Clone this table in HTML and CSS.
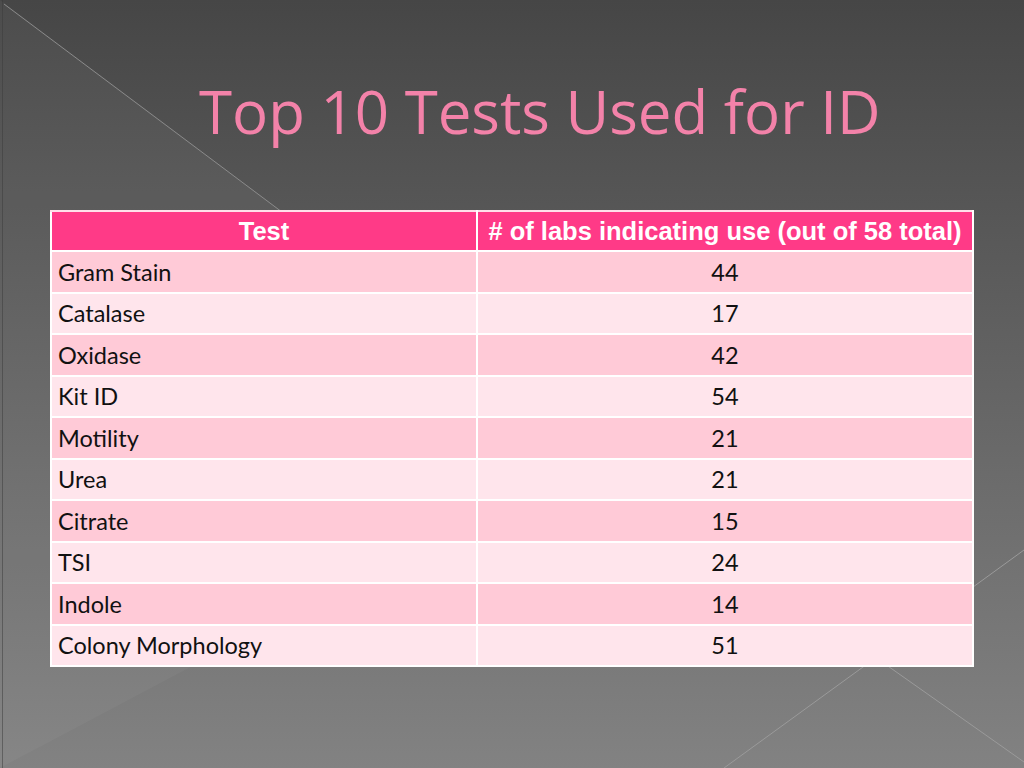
FILE: index.html
```html
<!DOCTYPE html>
<html>
<head>
<meta charset="utf-8">
<link rel="stylesheet" href="styles.css">
</head>
<body>
<div class="slide">
  <svg class="bg" width="1024" height="768" viewBox="0 0 1024 768">
    <defs>
      <linearGradient id="g" x1="0" y1="0" x2="0" y2="1">
        <stop offset="0" stop-color="#464646"/>
        <stop offset="1" stop-color="#828282"/>
      </linearGradient>
    </defs>
    <rect width="1024" height="768" fill="url(#g)"/>
    <polygon points="0,0 600,450 0,768" fill="#ffffff" opacity="0.035"/>
    <line x1="4" y1="4" x2="600" y2="450" stroke="#8a8a8a" stroke-width="1"/>
    <line x1="724" y1="768" x2="1024" y2="550" stroke="#9a9a9a" stroke-width="1"/>
    <line x1="780" y1="590" x2="1024" y2="762" stroke="#9a9a9a" stroke-width="1"/>
    <line x1="2.5" y1="0" x2="2.5" y2="768" stroke="#3c3c3c" stroke-width="1" opacity="0.5"/>
  </svg>
  <h1 class="title">Top 10 Tests Used for ID</h1>
  <table class="data">
    <thead>
      <tr><th class="c1">Test</th><th class="c2"># of labs indicating use (out of 58 total)</th></tr>
    </thead>
    <tbody>
      <tr><td>Gram Stain</td><td class="num">44</td></tr>
      <tr><td>Catalase</td><td class="num">17</td></tr>
      <tr><td>Oxidase</td><td class="num">42</td></tr>
      <tr><td>Kit ID</td><td class="num">54</td></tr>
      <tr><td>Motility</td><td class="num">21</td></tr>
      <tr><td>Urea</td><td class="num">21</td></tr>
      <tr><td>Citrate</td><td class="num">15</td></tr>
      <tr><td>TSI</td><td class="num">24</td></tr>
      <tr><td>Indole</td><td class="num">14</td></tr>
      <tr><td>Colony Morphology</td><td class="num">51</td></tr>
    </tbody>
  </table>
</div>
</body>
</html>
```
FILE: styles.css
```css
html, body {
  margin: 0;
  padding: 0;
  background: #5a5a5a;
}
.slide {
  position: relative;
  width: 1024px;
  height: 768px;
  overflow: hidden;
  display: flex;
  flex-direction: column;
  align-items: flex-start;
}
.bg {
  position: absolute;
  left: 0;
  top: 0;
  z-index: 0;
}
.title {
  position: relative;
  z-index: 1;
  margin: 69px 0 0 199px;
  font-family: "Open Sans", sans-serif;
  font-weight: 400;
  font-size: 60px;
  line-height: 84px;
  color: #f382a9;
  white-space: nowrap;
}
.data {
  position: relative;
  z-index: 1;
  margin: 57px 0 0 50px;
  width: 924px;
  border-collapse: collapse;
  border: 1px solid #d8d8d8;
  table-layout: fixed;
}
.data th, .data td {
  border: 2px solid #ffffff;
  padding: 0 6px;
}
.data th {
  height: 38px;
  background: #ff3a87;
  color: #ffffff;
  font-family: "Liberation Sans", Arial, sans-serif;
  font-weight: 700;
  font-size: 25.5px;
  text-align: center;
  border-top-color: #ffe0ea;
}
.data th.c1 { width: 412px; }
.data td {
  height: 39.5px;
  font-family: Lato, "Liberation Sans", sans-serif;
  font-size: 23.5px;
  color: #111111;
}
.data tbody tr:nth-child(odd) td { background: #ffcad7; }
.data tbody tr:nth-child(even) td { background: #ffe5ec; }
.data td.num { text-align: center; }
```
